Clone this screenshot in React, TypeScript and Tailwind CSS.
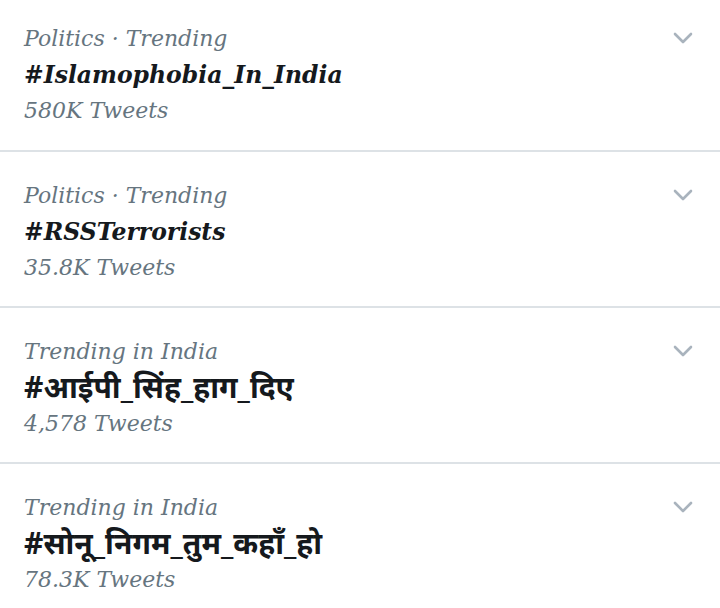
import React from 'react'

const trends = [
  { meta: 'Politics · Trending', tag: '#Islamophobia_In_India', count: '580K Tweets', deva: false },
  { meta: 'Politics · Trending', tag: '#RSSTerrorists', count: '35.8K Tweets', deva: false },
  { meta: 'Trending in India', tag: '#आईपी_सिंह_हाग_दिए', count: '4,578 Tweets', deva: true },
  { meta: 'Trending in India', tag: '#सोनू_निगम_तुम_कहाँ_हो', count: '78.3K Tweets', deva: true },
]

function Chevron() {
  return (
    <svg width="22" height="14" viewBox="0 0 22 14" fill="none" className="text-[#a9b3bd]">
      <path d="M3 3l8 8 8-8" stroke="currentColor" strokeWidth="2.6" strokeLinecap="round" strokeLinejoin="round" />
    </svg>
  )
}

export default function App() {
  return (
    <div className="w-[720px] h-[608px] overflow-hidden bg-white font-['DejaVu_Serif',serif]">
      {trends.map((t, i) => (
        <div
          key={i}
          className={`flex justify-between pl-[24px] pr-[24px] border-b-2 border-[#dde2e6] ${i === 0 ? 'pt-[21px] pb-[21px]' : 'pt-[26px] pb-[20px]'}`}
        >
          <div className="flex flex-col">
            <div className="h-[36px] leading-[36px] text-[22px] italic text-[#66757f]">{t.meta}</div>
            {t.deva ? (
              <div className="h-[36px] leading-[34px] text-[30px] font-bold text-[#15191d] font-['Noto_Sans',sans-serif]">{t.tag}</div>
            ) : (
              <div className="h-[36px] leading-[36px] text-[23.5px] italic font-bold text-[#15191d]">{t.tag}</div>
            )}
            <div className="h-[36px] leading-[36px] text-[22px] italic text-[#66757f]">{t.count}</div>
          </div>
          <div className="pt-[10px] pr-[2px]">
            <Chevron />
          </div>
        </div>
      ))}
    </div>
  )
}
